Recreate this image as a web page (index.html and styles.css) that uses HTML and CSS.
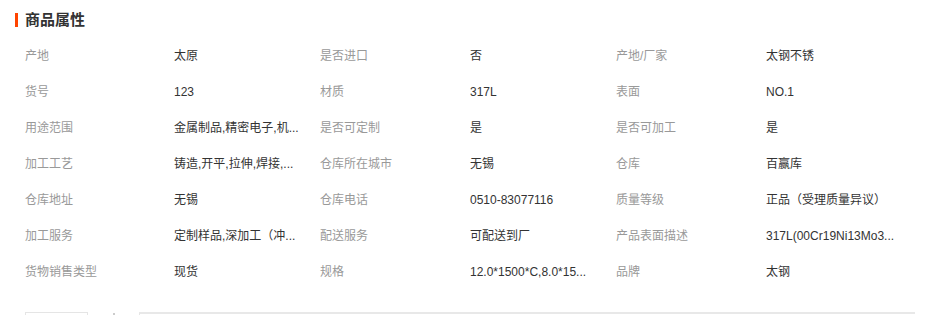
FILE: index.html
```html
<!DOCTYPE html>
<html lang="zh">
<head>
<meta charset="utf-8">
<title>商品属性</title>
<link rel="stylesheet" href="styles.css">
</head>
<body>
<div class="panel">
  <div class="title"><span class="bar"></span><span class="title-text">商品属性</span></div>
  <div class="attrs">
    <div class="k">产地</div><div class="v">太原</div>
    <div class="k">是否进口</div><div class="v">否</div>
    <div class="k">产地/厂家</div><div class="v">太钢不锈</div>

    <div class="k">货号</div><div class="v">123</div>
    <div class="k">材质</div><div class="v">317L</div>
    <div class="k">表面</div><div class="v">NO.1</div>

    <div class="k">用途范围</div><div class="v">金属制品,精密电子,机...</div>
    <div class="k">是否可定制</div><div class="v">是</div>
    <div class="k">是否可加工</div><div class="v">是</div>

    <div class="k">加工工艺</div><div class="v">铸造,开平,拉伸,焊接,...</div>
    <div class="k">仓库所在城市</div><div class="v">无锡</div>
    <div class="k">仓库</div><div class="v">百赢库</div>

    <div class="k">仓库地址</div><div class="v">无锡</div>
    <div class="k">仓库电话</div><div class="v">0510-83077116</div>
    <div class="k">质量等级</div><div class="v">正品（受理质量异议）</div>

    <div class="k">加工服务</div><div class="v">定制样品,深加工（冲...</div>
    <div class="k">配送服务</div><div class="v">可配送到厂</div>
    <div class="k">产品表面描述</div><div class="v">317L(00Cr19Ni13Mo3...</div>

    <div class="k">货物销售类型</div><div class="v">现货</div>
    <div class="k">规格</div><div class="v">12.0*1500*C,8.0*15...</div>
    <div class="k">品牌</div><div class="v">太钢</div>
  </div>
  <div class="tabs">
    <div class="tab-box"></div>
    <div class="tab-mark"></div>
    <div class="tab-wide"></div>
  </div>
</div>
</body>
</html>
```
FILE: styles.css
```css
html, body {
  margin: 0;
  padding: 0;
  background: #fff;
}
body {
  font-family: "Liberation Sans", "Noto Sans CJK SC", sans-serif;
  font-size: 12px;
  color: #333;
}
.panel {
  width: 945px;
  height: 315px;
  overflow: hidden;
}
.title {
  display: flex;
  align-items: center;
  height: 40px;
  padding-left: 15px;
  gap: 7px;
}
.bar {
  width: 3px;
  height: 14px;
  background: #ff4400;
}
.title-text {
  font-size: 15px;
  font-weight: bold;
  color: #333;
  line-height: 20px;
}
.attrs {
  display: grid;
  grid-template-columns: 149px 146px 150px 146px 150px 146px;
  grid-auto-rows: 36px;
  padding-left: 25px;
  margin-top: -2px;
}
.k, .v {
  line-height: 36px;
  white-space: nowrap;
}
.k {
  color: #999;
}
.v {
  color: #333;
}
.tabs {
  display: flex;
  align-items: flex-start;
  margin-top: 22px;
  padding-left: 25px;
}
.tab-box {
  width: 61px;
  height: 30px;
  border: 1px solid #e5e5e5;
}
.tab-mark {
  width: 2px;
  height: 2px;
  background: #ccc;
  margin: 1px 0 0 25px;
}
.tab-wide {
  width: 775px;
  height: 30px;
  border-top: 2px solid #e8e8e8;
  border-left: 1px solid #e5e5e5;
  margin-left: 24px;
}
```
